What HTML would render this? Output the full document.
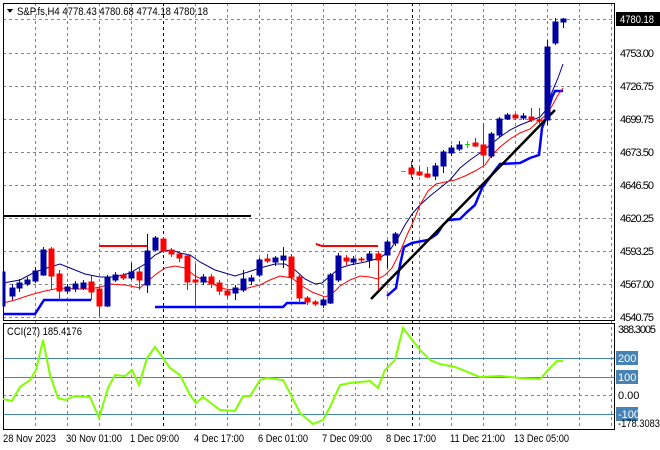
<!DOCTYPE html>
<html><head><meta charset="utf-8"><style>
html,body{margin:0;padding:0;background:#fff;}
svg{display:block;font-family:"Liberation Sans",sans-serif;}
</style></head><body>
<svg width="660" height="450" xmlns="http://www.w3.org/2000/svg" shape-rendering="crispEdges">
<rect width="660" height="450" fill="#fff"/>
<g stroke="#7a8591" stroke-dasharray="3,3" stroke-width="1">
<line x1="35.5" y1="3" x2="35.5" y2="429"/><line x1="67.5" y1="3" x2="67.5" y2="429"/><line x1="99.5" y1="3" x2="99.5" y2="429"/><line x1="131.5" y1="3" x2="131.5" y2="429"/><line x1="195.5" y1="3" x2="195.5" y2="429"/><line x1="227.5" y1="3" x2="227.5" y2="429"/><line x1="259.5" y1="3" x2="259.5" y2="429"/><line x1="291.5" y1="3" x2="291.5" y2="429"/><line x1="323.5" y1="3" x2="323.5" y2="429"/><line x1="355.5" y1="3" x2="355.5" y2="429"/><line x1="387.5" y1="3" x2="387.5" y2="429"/><line x1="419.5" y1="3" x2="419.5" y2="429"/><line x1="451.5" y1="3" x2="451.5" y2="429"/><line x1="483.5" y1="3" x2="483.5" y2="429"/><line x1="515.5" y1="3" x2="515.5" y2="429"/><line x1="547.5" y1="3" x2="547.5" y2="429"/><line x1="579.5" y1="3" x2="579.5" y2="429"/><line x1="611.5" y1="3" x2="611.5" y2="429"/>
<line x1="3" y1="19.5" x2="615" y2="19.5"/><line x1="3" y1="53.5" x2="615" y2="53.5"/><line x1="3" y1="86.5" x2="615" y2="86.5"/><line x1="3" y1="119.5" x2="615" y2="119.5"/><line x1="3" y1="152.5" x2="615" y2="152.5"/><line x1="3" y1="185.5" x2="615" y2="185.5"/><line x1="3" y1="218.5" x2="615" y2="218.5"/><line x1="3" y1="251.5" x2="615" y2="251.5"/><line x1="3" y1="284.5" x2="615" y2="284.5"/><line x1="3" y1="317.5" x2="615" y2="317.5"/>
<line x1="3" y1="395.5" x2="615" y2="395.5"/>
</g>
<g stroke="#000" stroke-dasharray="3,3"><line x1="163.5" y1="3" x2="163.5" y2="429"/><line x1="412.5" y1="3" x2="412.5" y2="429"/></g>
<g stroke="#4682b4"><line x1="3" y1="358.5" x2="615" y2="358.5"/><line x1="3" y1="377.5" x2="615" y2="377.5"/><line x1="3" y1="414.5" x2="615" y2="414.5"/></g>
<g stroke="#000" fill="none"><rect x="3.5" y="3.5" width="611" height="317"/><rect x="3.5" y="323.5" width="611" height="106"/></g>
<line x1="3" y1="216" x2="251" y2="216" stroke="#000" stroke-width="2"/>
<g stroke="#f00" stroke-width="2" fill="none"><line x1="99" y1="246" x2="147" y2="246"/><polyline points="316,244 322,246 378,246"/></g>
<g shape-rendering="auto" fill="none">
<polyline stroke="#0000ff" stroke-width="2.5" points="3,314 35,314 44,300 91,300"/>
<polyline stroke="#0000ff" stroke-width="2.5" points="155,307 283,307 287,303 306,303"/>
<polyline stroke="#0000ff" stroke-width="2.5" points="387,296 396,288 400,265 404,247 412,243 428,240 437,234 443,225 448,220 460,219 467,212 475,205 482,188 493,173 500,164 520,163 530,158 539,155 542,128 546,118 552,97 555,91 563,91"/>
<polyline stroke="#000080" stroke-width="1" points="3,283 20,280 35,272 50,267 60,264 70,268 85,274 100,277 115,277 130,273 145,264 155,255 163,251 172,250 180,253 190,255 200,262 215,270 235,276 248,272 260,268 275,264 285,264 295,270 305,279 315,284 322,283 330,276 340,268 350,265 365,262 380,258 390,250 398,238 405,225 412,214 420,205 430,196 440,188 450,180 460,168 470,160 480,153 490,145 500,137 510,130 520,125 530,121 540,117 546,110 552,92 558,78 563,64"/>
<polyline stroke="#ff0000" stroke-width="1" points="3,303 15,300 30,295 45,291 60,288 75,289 90,289 100,287 110,284 125,285 140,288 148,281 155,275 165,268 175,266 185,268 195,276 210,283 225,289 235,290 248,288 260,285 270,280 280,276 292,278 302,286 312,292 325,297 332,294 340,286 350,280 360,276 370,277 378,279 385,275 392,268 400,252 407,235 414,220 420,205 428,191 436,184 445,182 455,180 465,176 475,171 485,165 492,155 500,147 510,139 520,133 530,129 540,120 546,115 552,106 558,95 563,88"/>
<line x1="371" y1="299" x2="555" y2="110" stroke="#000" stroke-width="2.5"/>
</g>
<g stroke-width="1">
<g fill="#0000a0" stroke="#0000a0">
<line x1="12.5" y1="284" x2="12.5" y2="300"/><rect x="10" y="288" width="5" height="8"/>
<line x1="19.5" y1="279" x2="19.5" y2="292"/><rect x="17" y="283" width="5" height="5"/>
<line x1="27.5" y1="277" x2="27.5" y2="286"/><rect x="25" y="280" width="5" height="4"/>
<line x1="35.5" y1="267" x2="35.5" y2="283"/><rect x="33" y="271" width="5" height="10"/>
<line x1="43.5" y1="247" x2="43.5" y2="276"/><rect x="41" y="250" width="5" height="25"/>
<line x1="67.5" y1="284" x2="67.5" y2="294"/><rect x="65" y="287" width="5" height="4"/>
<line x1="75.5" y1="281" x2="75.5" y2="292"/><rect x="73" y="284" width="5" height="5"/>
<line x1="83.5" y1="280" x2="83.5" y2="290"/><rect x="81" y="283" width="5" height="5"/>
<line x1="107.5" y1="275" x2="107.5" y2="307"/><rect x="105" y="278" width="5" height="28"/>
<line x1="115.5" y1="272" x2="115.5" y2="282"/><rect x="113" y="275" width="5" height="5"/>
<line x1="131.5" y1="263" x2="131.5" y2="280"/><rect x="129" y="272" width="5" height="6"/>
<line x1="147.5" y1="234" x2="147.5" y2="293"/><rect x="145" y="251" width="5" height="34"/>
<line x1="155.5" y1="236" x2="155.5" y2="251"/><rect x="153" y="238" width="5" height="12"/>
<line x1="203.5" y1="274" x2="203.5" y2="285"/><rect x="201" y="277" width="5" height="5"/>
<line x1="235.5" y1="285" x2="235.5" y2="300"/><rect x="233" y="288" width="5" height="5"/>
<line x1="243.5" y1="270" x2="243.5" y2="292"/><rect x="241" y="279" width="5" height="11"/>
<line x1="251.5" y1="275" x2="251.5" y2="285"/><rect x="249" y="278" width="5" height="3"/>
<line x1="259.5" y1="258" x2="259.5" y2="277"/><rect x="257" y="260" width="5" height="15"/>
<line x1="275.5" y1="256" x2="275.5" y2="266"/><rect x="273" y="258" width="5" height="4"/>
<line x1="283.5" y1="247" x2="283.5" y2="268"/><rect x="281" y="256" width="5" height="4"/>
<line x1="323.5" y1="298" x2="323.5" y2="308"/><rect x="321" y="300" width="5" height="5"/>
<line x1="330.5" y1="273" x2="330.5" y2="304"/><rect x="328" y="275" width="5" height="28"/>
<line x1="338.5" y1="253" x2="338.5" y2="282"/><rect x="336" y="256" width="5" height="24"/>
<line x1="353.5" y1="256" x2="353.5" y2="265"/><rect x="351" y="259" width="5" height="3"/>
<line x1="369.5" y1="251" x2="369.5" y2="268"/><rect x="367" y="254" width="5" height="6"/>
<line x1="387.5" y1="240" x2="387.5" y2="268"/><rect x="385" y="242" width="5" height="13"/>
<line x1="395.5" y1="232" x2="395.5" y2="246"/><rect x="393" y="234" width="5" height="9"/>
<line x1="435.5" y1="163" x2="435.5" y2="180"/><rect x="433" y="166" width="5" height="10"/>
<line x1="443.5" y1="150" x2="443.5" y2="173"/><rect x="441" y="152" width="5" height="14"/>
<line x1="451.5" y1="145" x2="451.5" y2="156"/><rect x="449" y="148" width="5" height="5"/>
<line x1="459.5" y1="141" x2="459.5" y2="151"/><rect x="457" y="145" width="5" height="4"/>
<line x1="491.5" y1="132" x2="491.5" y2="158"/><rect x="489" y="134" width="5" height="22"/>
<line x1="499.5" y1="117" x2="499.5" y2="137"/><rect x="497" y="119" width="5" height="16"/>
<line x1="507.5" y1="113" x2="507.5" y2="120"/><rect x="505" y="115" width="5" height="4"/>
<line x1="523.5" y1="113" x2="523.5" y2="120"/><rect x="521" y="116" width="5" height="2"/>
<line x1="547.5" y1="40" x2="547.5" y2="125"/><rect x="545" y="47" width="5" height="73"/>
<line x1="555.5" y1="18" x2="555.5" y2="45"/><rect x="553" y="22" width="5" height="21"/>
<line x1="563.5" y1="18" x2="563.5" y2="28"/><rect x="561" y="19" width="5" height="3"/>
<rect x="3" y="272" width="2" height="34"/>
</g>
<g fill="#f00" stroke="#f00">
<line x1="51.5" y1="247" x2="51.5" y2="290"/><rect x="49" y="249" width="5" height="27"/>
<line x1="59.5" y1="270" x2="59.5" y2="300"/><rect x="57" y="274" width="5" height="17"/>
<line x1="91.5" y1="276" x2="91.5" y2="300"/><rect x="89" y="282" width="5" height="10"/>
<line x1="99.5" y1="286" x2="99.5" y2="316"/><rect x="97" y="289" width="5" height="17"/>
<line x1="123.5" y1="273" x2="123.5" y2="280"/><rect x="121" y="275" width="5" height="3"/>
<line x1="139.5" y1="268" x2="139.5" y2="290"/><rect x="137" y="272" width="5" height="8"/>
<line x1="163.5" y1="237" x2="163.5" y2="253"/><rect x="161" y="239" width="5" height="12"/>
<line x1="171.5" y1="248" x2="171.5" y2="257"/><rect x="169" y="250" width="5" height="4"/>
<line x1="179.5" y1="251" x2="179.5" y2="262"/><rect x="177" y="254" width="5" height="4"/>
<line x1="187.5" y1="254" x2="187.5" y2="290"/><rect x="185" y="256" width="5" height="26"/>
<line x1="195.5" y1="264" x2="195.5" y2="305"/><rect x="193" y="280" width="5" height="2"/>
<line x1="211.5" y1="274" x2="211.5" y2="288"/><rect x="209" y="277" width="5" height="7"/>
<line x1="219.5" y1="280" x2="219.5" y2="295"/><rect x="217" y="283" width="5" height="8"/>
<line x1="227.5" y1="289" x2="227.5" y2="298"/><rect x="225" y="291" width="5" height="4"/>
<line x1="267.5" y1="254" x2="267.5" y2="263"/><rect x="265" y="259" width="5" height="2"/>
<line x1="291.5" y1="254" x2="291.5" y2="290"/><rect x="289" y="257" width="5" height="20"/>
<line x1="299.5" y1="275" x2="299.5" y2="303"/><rect x="297" y="277" width="5" height="21"/>
<line x1="307.5" y1="296" x2="307.5" y2="305"/><rect x="305" y="298" width="5" height="4"/>
<line x1="315.5" y1="300" x2="315.5" y2="306"/><rect x="313" y="302" width="5" height="2"/>
<line x1="346.5" y1="255" x2="346.5" y2="265"/><rect x="344" y="258" width="5" height="3"/>
<line x1="361.5" y1="257" x2="361.5" y2="263"/><rect x="359" y="259" width="5" height="1"/>
<line x1="378.5" y1="251" x2="378.5" y2="290"/><rect x="376" y="254" width="5" height="6"/>
<line x1="411.5" y1="161" x2="411.5" y2="178"/><rect x="409" y="168" width="5" height="6"/>
<line x1="419.5" y1="167" x2="419.5" y2="176"/><rect x="417" y="172" width="5" height="3"/>
<line x1="427.5" y1="167" x2="427.5" y2="178"/><rect x="425" y="174" width="5" height="3"/>
<line x1="475.5" y1="138" x2="475.5" y2="147"/><rect x="473" y="143" width="5" height="3"/>
<line x1="483.5" y1="123" x2="483.5" y2="165"/><rect x="481" y="145" width="5" height="10"/>
<line x1="515.5" y1="113" x2="515.5" y2="120"/><rect x="513" y="115" width="5" height="3"/>
<line x1="531.5" y1="108" x2="531.5" y2="122"/><rect x="529" y="117" width="5" height="3"/>
<line x1="539.5" y1="108" x2="539.5" y2="125"/><rect x="537" y="120" width="5" height="1"/>
</g>
<g stroke="#00e000"><line x1="401" y1="171.5" x2="406" y2="171.5"/><line x1="465" y1="144.5" x2="470" y2="144.5"/><line x1="467.5" y1="141" x2="467.5" y2="148"/></g>
</g>
<polyline shape-rendering="auto" fill="none" stroke="#7fff00" stroke-width="2" points="3,399 12,401 20,387 30,380 36,370 43,340 50,375 58,398 65,400 75,396 90,397 99,418 108,388 115,375 125,376 132,370 139,385 147,358 155,347 163,358 170,368 180,375 190,395 196,403 203,397 220,410 235,411 243,396 250,396 260,380 267,378 283,380 291,395 300,413 313,424 323,420 330,407 340,385 350,383 370,381 378,388 385,370 395,360 403,328 420,350 430,360 440,364 455,367 480,377 500,376 520,378 540,379 550,368 557,361 563,361"/>
<polygon points="7,9 13,9 10,13" fill="#000"/>
<text x="17" y="15" font-size="11" fill="#000" textLength="191" lengthAdjust="spacingAndGlyphs">S&amp;P.fs,H4  4778.43 4780.68 4774.18 4780.18</text>
<text x="7" y="335" font-size="11" fill="#000" textLength="75" lengthAdjust="spacingAndGlyphs">CCI(27) 185.4176</text>
<g font-size="11" fill="#000">
<rect x="616" y="12" width="44" height="14" fill="#000"/>
<text x="620" y="23" fill="#fff" textLength="34" lengthAdjust="spacingAndGlyphs">4780.18</text>
<g lengthAdjust="spacingAndGlyphs">
<text x="620" y="57" textLength="34">4753.00</text><text x="620" y="90" textLength="34">4726.75</text><text x="620" y="123" textLength="34">4699.75</text><text x="620" y="156" textLength="34">4673.50</text><text x="620" y="189" textLength="34">4646.50</text><text x="620" y="222" textLength="34">4620.25</text><text x="620" y="255" textLength="34">4593.25</text><text x="620" y="288" textLength="34">4567.00</text><text x="620" y="321" textLength="34">4540.75</text>
<text x="618" y="333" textLength="38">388.3005</text>
</g>
<rect x="616" y="351" width="22" height="14" fill="#4682b4"/><text x="618" y="362" fill="#fff">200</text>
<rect x="616" y="370" width="22" height="14" fill="#4682b4"/><text x="618" y="381" fill="#fff">100</text>
<text x="618" y="399">0.00</text>
<rect x="616" y="407" width="22" height="14" fill="#4682b4"/><text x="618" y="418" fill="#fff">-100</text>
<text x="618" y="427" textLength="42" lengthAdjust="spacingAndGlyphs">-178.3083</text>
</g>
<g font-size="11" fill="#000" lengthAdjust="spacingAndGlyphs">
<text x="3" y="442" textLength="53" lengthAdjust="spacingAndGlyphs">28 Nov 2023</text><text x="66" y="442" textLength="56" lengthAdjust="spacingAndGlyphs">30 Nov 01:00</text><text x="130" y="442" textLength="49" lengthAdjust="spacingAndGlyphs">1 Dec 09:00</text><text x="194" y="442" textLength="50" lengthAdjust="spacingAndGlyphs">4 Dec 17:00</text><text x="258" y="442" textLength="50" lengthAdjust="spacingAndGlyphs">6 Dec 01:00</text><text x="322" y="442" textLength="50" lengthAdjust="spacingAndGlyphs">7 Dec 09:00</text><text x="386" y="442" textLength="50" lengthAdjust="spacingAndGlyphs">8 Dec 17:00</text><text x="450" y="442" textLength="55" lengthAdjust="spacingAndGlyphs">11 Dec 21:00</text><text x="514" y="442" textLength="55" lengthAdjust="spacingAndGlyphs">13 Dec 05:00</text>
</g>
</svg>
</body></html>
